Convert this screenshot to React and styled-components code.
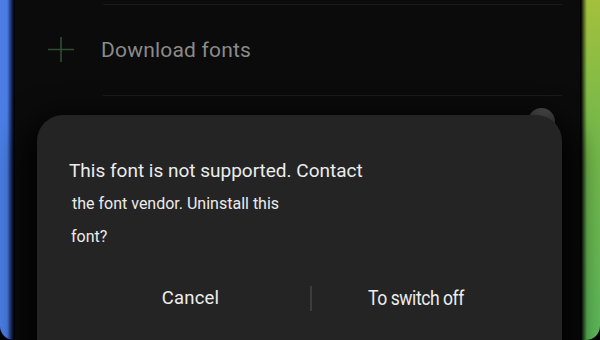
import styled, { createGlobalStyle } from "styled-components";

const GlobalStyle = createGlobalStyle`
  html, body {
    margin: 0;
    padding: 0;
    background: #000;
  }
  body {
    font-family: Roboto, "Liberation Sans", sans-serif;
  }
`;

const Frame = styled.div`
  width: 600px;
  height: 340px;
  display: flex;
  overflow: hidden;
  background: #000;
`;

const Rim = styled.div`
  width: ${({ side }) => (side === "left" ? "15px" : "20px")};
  flex-shrink: 0;
  background: ${({ side }) =>
    side === "left"
      ? "linear-gradient(to right, #4b7fe6 0, #4a7de4 7px, #27458f 10px, #0a1226 13px, #000 15px)"
      : "linear-gradient(to right, #000 0, #000 1px, rgba(0,0,0,0.45) 4px, transparent 7px), linear-gradient(to bottom, #a4c03c 0, #7cba48 110px, #5cb95a 340px)"};
  border-bottom-${({ side }) => side}-radius: 14px;
`;

const Screen = styled.div`
  flex: 1;
  position: relative;
  background: #0b0b0b;
  display: flex;
  flex-direction: column;
`;

const Divider = styled.div`
  height: 1px;
  background: #1b1b1b;
  margin: ${({ top }) => top}px 18px 0 88px;
`;

const Row = styled.div`
  height: ${({ h }) => h}px;
  display: flex;
  align-items: center;
  padding-left: 33px;
`;

const PlusIcon = styled.svg`
  width: 26px;
  height: 26px;
  flex-shrink: 0;
`;

const RowLabel = styled.span`
  margin-left: 27px;
  font-size: 21px;
  color: #8a8a8a;
  letter-spacing: 0.2px;
`;

const ToggleRow = styled.div`
  display: flex;
  justify-content: flex-end;
  padding: 12px 25px 0 0;
`;

const Knob = styled.div`
  width: 27px;
  height: 27px;
  border-radius: 50%;
  background: radial-gradient(circle at 50% 35%, #5c5c5c, #464646 70%);
`;

const Dialog = styled.div`
  position: absolute;
  left: 22px;
  top: 115px;
  width: 525px;
  height: 270px;
  box-sizing: border-box;
  padding: 40px 32px 0 32px;
  background: #242424;
  border-radius: 26px;
  box-shadow: 0 14px 30px 12px rgba(0, 0, 0, 0.9);
  display: flex;
  flex-direction: column;
`;

const Message = styled.p`
  margin: 0;
  color: #ececec;
  font-size: ${({ size }) => size}px;
  line-height: ${({ lh }) => lh}px;
  padding-left: ${({ indent }) => indent || 0}px;
`;

const Buttons = styled.div`
  margin-top: 25px;
  height: 40px;
  display: grid;
  grid-template-columns: 241px 2px 1fr;
  align-items: center;
`;

const Button = styled.button`
  background: none;
  border: none;
  padding: 0;
  color: #ededed;
  font-family: Roboto, "Liberation Sans", sans-serif;
  font-size: ${({ narrow }) => (narrow ? "19.5px" : "18.5px")};
  letter-spacing: ${({ narrow }) => (narrow ? "-0.5px" : "0.2px")};
  text-align: center;
  transform: translateX(${({ shift }) => shift}px)
    scaleX(${({ narrow }) => (narrow ? 0.9 : 1)});
`;

const Separator = styled.div`
  width: 1.5px;
  height: 25px;
  background: #3c3c3c;
`;

export default function App() {
  return (
    <>
      <GlobalStyle />
      <Frame>
        <Rim side="left" />
        <Screen>
          <Divider top={4} />
          <Row h={90}>
            <PlusIcon viewBox="0 0 26 26">
              <path
                d="M13 0v25M0 12.5h26"
                stroke="#2f4e33"
                strokeWidth="1.6"
                fill="none"
              />
            </PlusIcon>
            <RowLabel>Download fonts</RowLabel>
          </Row>
          <Divider top={0} />
          <ToggleRow>
            <Knob />
          </ToggleRow>
          <Dialog>
            <Message size={19} lh={32}>
              This font is not supported. Contact
            </Message>
            <Message size={16} lh={33} indent={3}>
              the font vendor. Uninstall this
            </Message>
            <Message size={16} lh={33} indent={2}>
              font?
            </Message>
            <Buttons>
              <Button shift={1}>Cancel</Button>
              <Separator />
              <Button narrow shift={-5}>To switch off</Button>
            </Buttons>
          </Dialog>
        </Screen>
        <Rim side="right" />
      </Frame>
    </>
  );
}
